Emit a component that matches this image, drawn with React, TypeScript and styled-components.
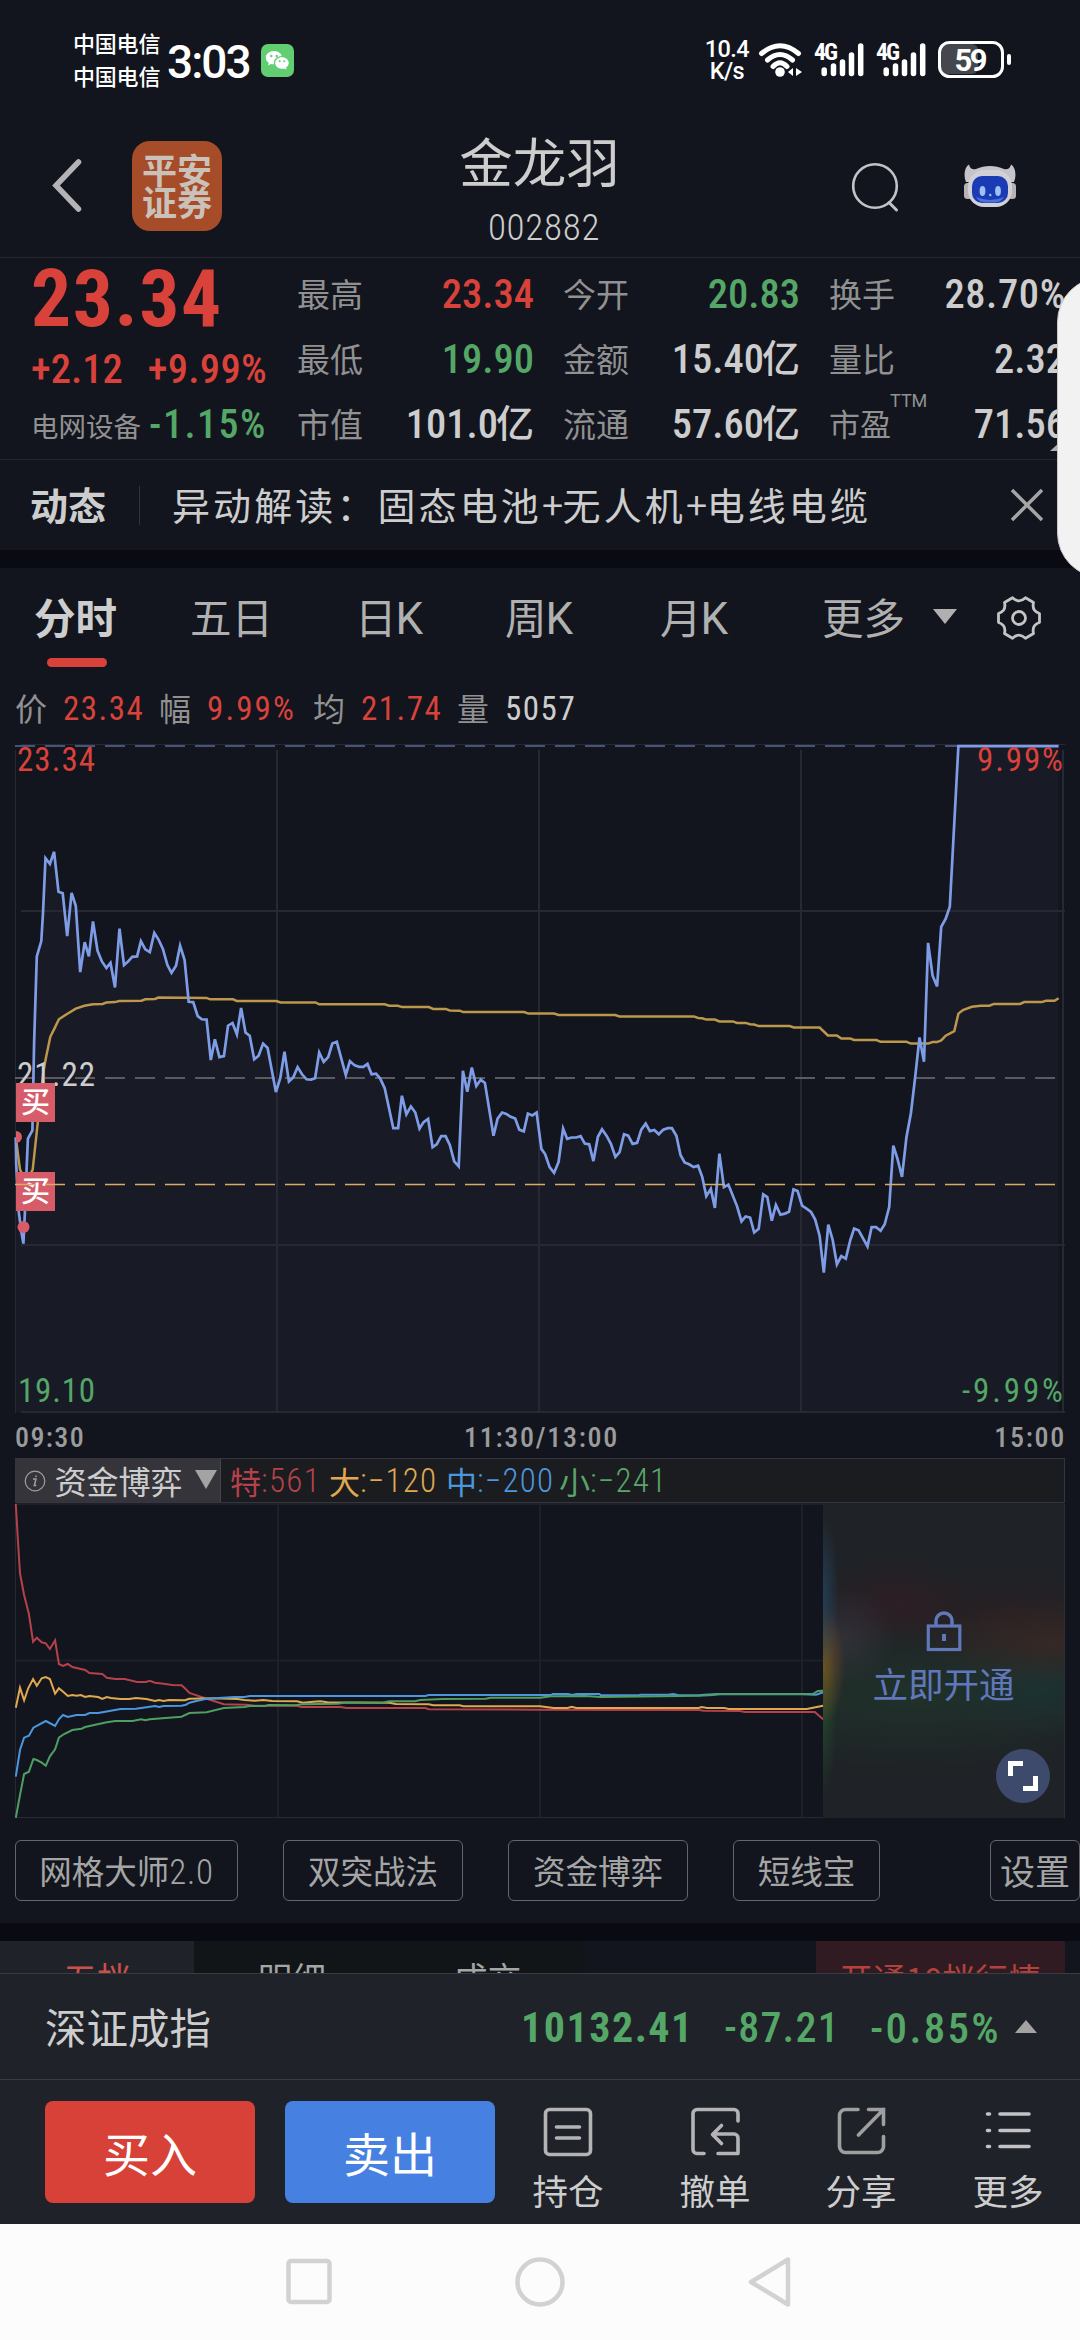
import React from "react";
import styled, { createGlobalStyle } from "styled-components";

const CJK = '"Noto Sans CJK SC", sans-serif';
const NUM = '"Roboto Condensed", Roboto, "Noto Sans CJK SC", sans-serif';
const RED = "#d9423a";
const GREEN = "#54a766";
const LIGHT = "#cdcdcd";
const GREY = "#919191";

const Global = createGlobalStyle`
  * { box-sizing: border-box; }
  body { margin: 0; background: #12151d; }
`;

const Screen = styled.div`
  position: relative;
  width: 1080px;
  height: 2340px;
  overflow: hidden;
  display: flex;
  flex-direction: column;
  background: #12151d;
  color: ${LIGHT};
  font-family: ${CJK};
  white-space: nowrap;
`;

/* Number text with narrow figures */
const Num = styled.span<{ $s: number; $c?: string; $w?: number; $ls?: number }>`
  font-family: ${NUM};
  font-size: ${(p) => p.$s}px;
  font-weight: ${(p) => p.$w ?? 500};
  letter-spacing: ${(p) => p.$ls ?? 0}px;
  color: ${(p) => p.$c ?? LIGHT};
  line-height: 1;
`;

/* ---------- status bar ---------- */
const StatusBar = styled.div`
  height: 120px;
  display: flex;
  align-items: center;
  justify-content: space-between;
  padding: 0 68px 0 73px;
  color: #fff;
`;
const StatusSide = styled.div`
  display: flex;
  align-items: center;
`;
const Carriers = styled.div`
  font-size: 22px;
  font-weight: 500;
  line-height: 33px;
  letter-spacing: -0.2px;
  width: 94px;
  margin-top: -3px;
`;
const Clock = styled.div`
  font: 500 46px/50px Roboto, sans-serif;
  letter-spacing: -2px;
  width: 94px;
  padding-top: 3px;
`;
const Speed = styled.div`
  font: 500 23.5px/22px Roboto, sans-serif;
  letter-spacing: -0.6px;
  text-align: center;
  margin-right: 9px;
`;
const StatusIcons = styled.svg`
  display: block;
`;

/* ---------- header ---------- */
const Header = styled.div`
  height: 138px;
  display: grid;
  grid-template-columns: 132px 90px 1fr 46px 66px 52px 64px;
  align-items: center;
  padding-bottom: 6px;
  border-bottom: 1px solid #282730;
`;
const Back = styled.svg`
  margin-left: 50px;
`;
const Logo = styled.div`
  width: 90px;
  height: 90px;
  border-radius: 18px;
  background: #a64c28;
  color: #cbc1bb;
  font-size: 35px;
  font-weight: 700;
  line-height: 32px;
  text-align: center;
  padding-top: 12px;
`;
const TitleBox = styled.div`
  display: flex;
  flex-direction: column;
  align-items: center;
  margin-left: 5px;
`;
const Title = styled.div`
  font-size: 53.5px;
  line-height: 62px;
  margin-top: 0;
  margin-bottom: 18px;
`;
const Code = styled.div`
  display: flex;
  margin-left: 9px;
  height: 34px;
`;

/* ---------- quote ---------- */
const Quote = styled.div`
  height: 202px;
  display: grid;
  grid-template-columns: repeat(4, 236px);
  column-gap: 30px;
  padding-left: 31px;
  border-bottom: 1px solid #282730;
`;
const PriceCol = styled.div`
  display: flex;
  flex-direction: column;
`;
const PriceRow = styled.div<{ $h: number }>`
  height: ${(p) => p.$h}px;
  display: flex;
  align-items: center;
  justify-content: space-between;
`;
const Sector = styled.span`
  font-size: 27.5px;
  color: ${GREY};
`;
const StatCol = styled.div`
  display: flex;
  flex-direction: column;
  padding-top: 4px;
`;
const StatRow = styled.div`
  height: 65px;
  display: flex;
  align-items: center;
  justify-content: space-between;
  position: relative;
`;
const StatLabel = styled.span<{ $small?: boolean }>`
  font-size: ${(p) => (p.$small ? 31 : 33)}px;
  line-height: 40px;
  padding-bottom: 4px;
  color: ${GREY};
`;
const StatValue = styled.span`
  display: flex;
  align-items: center;
  margin-right: -1px;
`;
const Unit = styled.span`
  font-size: 38px;
  line-height: 40px;
  padding-bottom: 7px;
  font-weight: 500;
  margin-left: -2px;
`;
const Ttm = styled.sup`
  position: absolute;
  left: 61px;
  top: -1px;
  font: 400 18px/20px Roboto, sans-serif;
  color: ${GREY};
`;
const Corner = styled.svg`
  position: absolute;
  left: 221px;
  top: 50px;
`;

/* ---------- news ---------- */
const News = styled.div`
  height: 90px;
  display: flex;
  align-items: center;
  padding: 0 34px 0 30px;
`;
const NewsTag = styled.span`
  font-size: 38px;
  line-height: 60px;
  padding-bottom: 3px;
  font-weight: 700;
  width: 109px;
`;
const NewsLine = styled.span`
  width: 1px;
  height: 39px;
  background: #33333f;
  margin-right: 32px;
`;
const NewsText = styled.span`
  flex: 1;
  font-size: 38px;
  line-height: 60px;
  padding-bottom: 3px;
  letter-spacing: 3.1px;
`;
const Plus = styled.span`
  letter-spacing: -0.4px;
`;
const Gap = styled.div`
  height: 18px;
  background: #0a0a13;
`;

/* ---------- period tabs ---------- */
const Tabs = styled.div`
  height: 110px;
  display: grid;
  grid-template-columns: 156px 165px 150px 155px 162px 110px 64px 50px;
  padding-left: 34px;
  align-items: start;
`;
const Tab = styled.div<{ $on?: boolean }>`
  font-size: 41.5px;
  line-height: 97px;
  font-weight: ${(p) => (p.$on ? 700 : 400)};
  color: ${(p) => (p.$on ? LIGHT : "#b0b0b0")};
  height: 99px;
  position: relative;
`;
const Underline = styled.i`
  position: absolute;
  left: 13px;
  bottom: 0;
  width: 60px;
  height: 9px;
  border-radius: 5px;
  background: ${RED};
`;
const TabK = styled.span`
  font-size: 44px;
  font-family: Roboto, sans-serif;
  font-weight: 400;
  line-height: 1;
  margin-left: -1px;
`;
const TabIcon = styled.svg`
  margin-top: 27px;
`;

const InfoRow = styled.div`
  height: 60px;
  display: flex;
  align-items: center;
  padding-left: 15px;
`;
const InfoItem = styled.div<{ $w: number }>`
  width: ${(p) => p.$w}px;
  display: flex;
  align-items: center;
  gap: 16px;
  font-size: 32px;
  line-height: 44px;
  color: ${GREY};
`;
const InfoLabel = styled.span`
  padding-bottom: 3px;
`;

const Chart = styled.svg`
  display: block;
  flex: none;
`;
const TimeAxis = styled.div`
  height: 44px;
  display: grid;
  grid-template-columns: 1fr auto 1fr;
  align-items: center;
  padding: 4px 15px 0;
  & > :nth-child(2) { margin-left: 3px; }
  & > :last-child { text-align: right; margin-right: -1px; }
`;

/* ---------- funds ---------- */
const FundHead = styled.div`
  height: 45px;
  margin: 0 15px;
  display: flex;
  align-items: center;
  background: #1b1c20;
  border: 1px solid #35353f;
`;
const FundPick = styled.div`
  width: 205px;
  height: 43px;
  display: flex;
  align-items: center;
  justify-content: space-between;
  padding: 0 3px 0 8px;
  background: #35343a;
  border-right: 1px solid #45454f;
  font-size: 32px;
  line-height: 43px;
  margin-right: 9px;
`;
const PickName = styled.span`
  margin-right: 4px;
`;
const FundItem = styled.div<{ $c: string; $w: number }>`
  width: ${(p) => p.$w}px;
  display: flex;
  align-items: center;
  font-size: 31px;
  line-height: 43px;
  color: ${(p) => p.$c};
`;
const FundBody = styled.div`
  position: relative;
  height: 315px;
`;
const LockPanel = styled.div`
  position: absolute;
  left: 823px;
  top: 1px;
  width: 242px;
  height: 314px;
  display: flex;
  flex-direction: column;
  align-items: center;
  gap: 5px;
  padding-top: 107px;
  color: #6077ba;
  font-size: 35.5px;
  line-height: 50px;
  border-right: 1px solid #2b2e35;
  background:
    radial-gradient(ellipse 16px 80px at 0 90px, rgba(38, 78, 112, 0.6), transparent),
    radial-gradient(ellipse 22px 60px at 0 162px, rgba(150, 95, 30, 0.65), transparent),
    radial-gradient(ellipse 14px 90px at 0 205px, rgba(35, 85, 45, 0.6), transparent),
    radial-gradient(ellipse 50px 50px at 22px 133px, rgba(66, 58, 70, 0.5), transparent),
    radial-gradient(ellipse 70px 46px at 72px 96px, rgba(58, 28, 36, 0.5), transparent),
    radial-gradient(ellipse 130px 46px at 232px 138px, rgba(62, 42, 36, 0.7), transparent),
    radial-gradient(ellipse 150px 50px at 180px 112px, rgba(46, 30, 34, 0.55), transparent),
    radial-gradient(ellipse 110px 50px at 222px 182px, rgba(26, 56, 56, 0.6), transparent),
    radial-gradient(ellipse 260px 80px at 90px 190px, rgba(32, 54, 44, 0.75), transparent),
    #1f2226;
`;
const Expand = styled.svg`
  position: absolute;
  left: 996px;
  top: 246px;
`;

const Chips = styled.div`
  height: 105px;
  display: flex;
  align-items: flex-start;
  padding: 22px 0 0 15px;
  gap: 45px;
`;
const Chip = styled.div<{ $w: number; $last?: boolean }>`
  width: ${(p) => p.$w}px;
  flex: none;
  height: 61px;
  border: 1px solid #66666a;
  border-radius: 6px;
  font-size: ${(p) => (p.$last ? 35 : 32.5)}px;
  line-height: 58px;
  text-align: center;
  color: #a5a5a5;
  margin-left: ${(p) => (p.$last ? 65 : 0)}px;
`;

/* ---------- order book strip ---------- */
const Book = styled.div`
  height: 32px;
  overflow: hidden;
  display: grid;
  grid-template-columns: 194px 196px 195px 231px 249px;
  font-size: 34px;
  line-height: 44px;
  color: #a5a5a5;
  text-align: center;
`;
const BookCell = styled.div<{ $bg?: string; $c?: string }>`
  height: 60px;
  padding-top: 15px;
  background: ${(p) => p.$bg ?? "transparent"};
  color: ${(p) => p.$c ?? "inherit"};
`;
const Promo = styled.span`
  font-size: 33px;
`;

/* ---------- index and actions ---------- */
const IndexBar = styled.div`
  height: 106px;
  display: flex;
  align-items: center;
  padding-left: 45px;
  background: #1f2229;
  border-top: 1px solid #3a3c44;
`;
const IndexName = styled.span`
  font-size: 41.5px;
  line-height: 60px;
  padding-bottom: 1px;
  width: 476px;
`;
const Cell = styled.span<{ $w: number }>`
  width: ${(p) => p.$w}px;
  display: flex;
  padding-top: 3px;
`;
const Actions = styled.div`
  height: 145px;
  display: flex;
  align-items: flex-start;
  padding: 21px 0 0 45px;
  background: #1f2229;
  border-top: 1px solid #3a3c44;
`;
const Trade = styled.div<{ $bg: string }>`
  flex: none;
  width: 210px;
  height: 102px;
  margin-right: 30px;
  border-radius: 8px;
  background: ${(p) => p.$bg};
  color: #fff;
  font-size: 47px;
  line-height: 101px;
  text-align: center;
`;
const Action = styled.div<{ $w: number }>`
  flex: none;
  width: ${(p) => p.$w}px;
  display: flex;
  flex-direction: column;
  align-items: center;
  padding-top: 6px;
  font-size: 35.5px;
  line-height: 44px;
  gap: 11px;
`;
const NavBar = styled.div`
  height: 116px;
  background: #fcfcfc;
  display: flex;
  justify-content: center;
  align-items: center;
  gap: 180px;
`;
const SidePanel = styled.div`
  position: absolute;
  left: 1057px;
  top: 277px;
  width: 90px;
  height: 301px;
  border-radius: 45px;
  background: #f2f2f2;
  border: 1px solid #c8c8cc;
`;

const PRICE =
  "46,665 47,740 54,870 62,930 68,962 72,880 77,760 81,668 94,645 99,400 107,158 120,115 125,37 132,-117 145,-101 157,-135 170,-23 182,-19 195,101 208,-20 220,17 233,202 246,118 258,158 270,60 283,142 296,172 309,190 321,176 334,245 347,80 360,182 371,173 384,159 398,158 409,115 422,138 435,146 448,92 460,110 473,137 486,182 498,204 511,184 523,128 536,168 548,285 561,286 574,325 586,334 600,335 612,448 624,390 637,440 650,437 662,352 675,344 688,376 700,302 713,371 725,380 738,446 751,436 764,402 777,414 801,538 814,498 826,425 839,508 852,496 864,468 877,488 890,502 903,503 915,499 927,427 940,453 953,440 965,402 978,397 1004,490 1016,451 1030,463 1043,467 1055,467 1067,459 1079,488 1092,486 1104,500 1117,527 1142,639 1156,639 1167,548 1180,600 1193,578 1206,595 1218,640 1230,622 1243,613 1256,692 1268,684 1281,661 1294,661 1306,686 1319,732 1332,746 1344,478 1357,537 1370,469 1383,521 1396,503 1408,512 1433,660 1445,612 1458,595 1470,599 1483,607 1496,612 1508,643 1521,648 1533,598 1546,603 1558,595 1572,697 1583,712 1596,748 1609,764 1622,733 1635,640 1647,669 1660,665 1673,665 1686,661 1698,682 1711,684 1723,731 1736,663 1748,642 1761,660 1774,683 1787,719 1799,706 1812,656 1824,660 1837,683 1850,680 1862,643 1875,626 1887,647 1900,644 1913,656 1926,643 1939,639 1951,639 1964,660 1976,714 1988,735 2001,740 2014,748 2027,744 2039,775 2051,829 2064,809 2076,862 2089,710 2102,804 2115,797 2140,857 2153,900 2165,886 2178,889 2190,931 2203,921 2216,824 2228,832 2241,898 2253,854 2266,881 2279,878 2291,873 2304,810 2316,815 2329,856 2342,864 2355,873 2367,895 2380,940 2392,1043 2405,909 2418,952 2430,1020 2443,997 2456,1004 2469,952 2480,920 2493,925 2519,970 2531,916 2544,916 2557,926 2569,908 2582,860 2594,688 2606,725 2619,775 2632,665 2645,597 2657,500 2670,385 2683,453 2695,120 2708,212 2721,242 2733,75 2746,52 2758,19 2783,-431 3074,-431";
const AVERAGE =
  "46,665 52,710 58,755 76,790 95,755 110,620 126,480 134,440 146,383 158,360 171,334 190,322 220,304 245,296 270,292 298,291 309,287 334,286 346,283 411,282 422,278 450,277 460,273 600,274 610,278 677,278 688,283 802,283 815,287 916,287 927,292 1117,292 1130,296 1155,296 1168,300 1245,300 1258,305 1294,305 1306,309 1335,310 1345,314 1522,314 1534,318 1609,318 1622,322 1786,322 1799,326 2015,326 2027,330 2039,331 2051,335 2076,335 2089,340 2128,340 2140,344 2165,344 2178,348 2190,349 2203,353 2293,353 2305,357 2380,357 2404,379 2430,379 2443,388 2469,388 2480,392 2545,392 2557,397 2632,397 2645,402 2695,402 2708,398 2721,398 2733,393 2746,380 2771,367 2783,318 2796,308 2822,299 2848,296 2873,296 2886,291 2962,291 2974,286 3025,286 3037,282 3062,282 3074,275";

const FUNDS: { color: string; points: string }[] = [
  {
    color: "#b5424a",
    points:
      "46,192 52,300 58,400 70,465 84,522 96,605 107,593 121,607 133,610 145,627 160,601 171,672 183,678 197,672 210,681 247,690 260,699 297,702 310,713 335,717 362,717 398,726 423,726 435,722 450,728 475,731 500,735 527,736 537,745 550,759 600,776 650,793 715,794 740,797 862,797 875,801 990,801 1005,804 1235,804 1245,808 1568,809 2030,810 2043,812 2148,813 2163,816 2366,816 2390,838",
  },
  {
    color: "#e0a94f",
    points:
      "46,803 58,743 70,781 82,745 96,717 107,737 121,715 133,711 145,717 160,761 171,745 185,757 197,768 210,765 222,767 235,765 247,771 260,768 285,771 297,777 310,771 322,774 350,777 375,777 395,774 425,777 450,783 462,780 475,783 490,780 537,781 550,776 620,775 690,777 710,780 740,782 765,780 790,783 862,784 880,788 910,785 930,784 950,787 1130,788 1150,792 1245,793 1258,796 1335,796 1345,799 1568,799 1608,804 1648,804 1660,800 1673,804 2028,804 2038,801 2053,804 2103,804 2116,807 2343,807 2368,802 2390,797",
  },
  {
    color: "#4b97dd",
    points:
      "46,1010 58,930 70,893 84,887 97,863 133,843 160,858 171,838 183,825 197,831 222,825 247,825 260,819 285,819 322,812 350,807 395,806 425,802 450,798 462,801 475,798 527,797 540,794 550,788 570,783 600,776 680,771 710,771 725,768 1235,768 1245,765 1600,765 1605,762 1650,762 1660,765 1675,762 1740,762 1745,766 1855,766 1860,764 1940,764 1955,762 1970,766 2030,766 2045,764 2085,762 2330,763 2370,764 2390,757",
  },
  {
    color: "#4f9e63",
    points:
      "46,1133 58,1065 70,1002 84,995 97,957 107,960 121,968 133,977 145,949 160,928 171,893 185,883 210,870 237,866 247,861 310,847 335,843 385,843 410,838 422,841 435,838 527,830 550,819 600,817 650,804 710,801 725,798 770,798 780,795 860,796 875,793 980,791 1000,788 1110,788 1130,784 1205,784 1220,780 1285,777 1410,776 1425,773 1568,773 1600,769 1700,768 1745,771 2030,767 2070,765 2090,762 2360,762 2375,753 2390,752",
  },
];

/* Turns a sampled trace into chart pixels */
const trace = (points: string, ky: number, dy: number) =>
  points
    .split(" ")
    .map((p) => {
      const [x, y] = p.split(",").map(Number);
      return `${(x / 2.9037).toFixed(1)},${(y / ky + dy).toFixed(1)}`;
    })
    .join(" ");

const AxisText = styled.text`
  font-family: ${NUM};
  font-size: 33px;
  font-weight: 400;
`;
const MarkText = styled.text`
  font-family: ${CJK};
  font-size: 29px;
  font-weight: 500;
  fill: #fff;
`;

const Mark = ({ y }: { y: number }) => (
  <g>
    <rect x="16" y={y} width="39" height="39" fill="#d65c69" />
    <MarkText x="21" y={y + 30}>买</MarkText>
  </g>
);

const PriceChart = () => {
  const price = trace(PRICE, 2.8, 162);
  return (
    <Chart width="1080" height="676" viewBox="0 0 1080 676">
      <polygon points={`${price} 1058.7,674 16,674`} fill="#181a26" />
      <g stroke="#262833" strokeWidth="2">
        <path d="M21 6.500H1065" strokeWidth="1" />
        <path d="M21 173H1065M21 507H1065M21 674H1065" />
        <path d="M277 12V675M539 12V675M801 12V675M1063 12V675" />
        <path d="M15.500 12V675" strokeWidth="1" />
      </g>
      <g fill="none" strokeDasharray="20 10">
        <path d="M15 8H1056" stroke="#46547a" strokeWidth="2" />
        <path d="M15 340H1056" stroke="#5b5c62" strokeWidth="1.800" />
      </g>
      <AxisText x="17" y="33" textLength="78" fill={RED}>23.34</AxisText>
      <polyline points={trace(AVERAGE, 2.8, 162)} fill="none" stroke="#bd974c" strokeWidth="2.500" />
      <polyline points={price} fill="none" stroke="#7f9de6" strokeWidth="2.700" />
      <AxisText x="1063" y="33" textLength="86" textAnchor="end" fill={RED}>9.99%</AxisText>
      <AxisText x="17" y="348" textLength="78" fill={LIGHT}>21.22</AxisText>
      <AxisText x="18" y="664" textLength="77" fill={GREEN}>19.10</AxisText>
      <AxisText x="1063" y="664" textLength="101" textAnchor="end" fill={GREEN}>-9.99%</AxisText>
      <path d="M16 393a6 6 0 0 1 0 12z" fill="#d65c69" />
      <circle cx="23.500" cy="489" r="6" fill="#d65c69" />
      <Mark y={345} />
      <Mark y={434} />
      <path d="M15 446.500H1056" stroke="#dcaa64" strokeWidth="1.300" strokeDasharray="20 10" />
    </Chart>
  );
};

type Stat = [string, string, string?, string?];
const STATS: Stat[][] = [
  [["最高", "23.34", RED], ["最低", "19.90", GREEN], ["市值", "101.0", LIGHT, "亿"]],
  [["今开", "20.83", GREEN], ["金额", "15.40", LIGHT, "亿"], ["流通", "57.60", LIGHT, "亿"]],
  [["换手", "28.70%"], ["量比", "2.32"], ["市盈", "71.56"]],
];

const Signal = ({ x }: { x: number }) => (
  <g transform={`translate(${x} 0)`}>
    <text x="0" y="25" fontFamily={NUM} fontWeight="700" fontSize="24" fill="#fff" textLength="24">4G</text>
    <g stroke="#fff" strokeWidth="5.500" strokeLinecap="round">
      <path d="M10.200 35V38.500M19.500 31V38.500M28.500 27V38.500M37.500 20V38.500M46.700 11V38.500" />
    </g>
  </g>
);

export default function App() {
  return (
    <Screen>
      <Global />
      <StatusBar>
        <StatusSide>
          <Carriers>中国电信<br />中国电信</Carriers>
          <Clock>3:03</Clock>
          <StatusIcons width="33" height="33" viewBox="0 0 33 33">
            <rect width="33" height="33" rx="7" fill="#61ce72" />
            <path d="M13 7c-4.700 0-8.200 3-8.200 6.700 0 2.100 1.100 3.900 2.900 5.100l-.6 2.600 2.800-1.500c1 .3 2 .4 3.100.4-.9-4.500 2.600-8.200 7.800-8.200C19.900 9.200 16.800 7 13 7z" fill="#fff" />
            <path d="M21 13.300c-3.900 0-6.800 2.500-6.800 5.700s2.900 5.700 6.800 5.700c.8 0 1.600-.1 2.300-.3l2.200 1.200-.5-2.100c1.600-1 2.700-2.600 2.700-4.500 0-3.200-2.900-5.700-6.700-5.700z" fill="#fff" />
            <g fill="#61ce72">
              <circle cx="10.300" cy="12" r="1.200" /><circle cx="15.700" cy="12" r="1.200" />
              <circle cx="18.700" cy="17.300" r="1" /><circle cx="23.200" cy="17.300" r="1" />
            </g>
          </StatusIcons>
        </StatusSide>
        <StatusSide>
          <Speed>10.4<br />K/s</Speed>
          <StatusIcons width="254" height="50" viewBox="0 0 254 50">
            <g fill="none" stroke="#fff" strokeWidth="5" strokeLinecap="round">
              <path d="M3.500 18.500Q22 3 40.500 18.500M9.500 25Q22 14 34.500 25M15 31.500Q22 24 29 31.500" />
            </g>
            <circle cx="22" cy="37" r="4.800" fill="#fff" />
            <path d="M35 33v8l-5-4zM38 33v8l6-4z" fill="#fff" />
            <Signal x={56} />
            <Signal x={118} />
            <rect x="182" y="9" width="38" height="30" rx="6" fill="#45474e" />
            <rect x="181.500" y="7.500" width="63" height="34" rx="10" fill="none" stroke="#fff" strokeWidth="3" />
            <rect x="249" y="19" width="4" height="11" rx="2" fill="#fff" />
            <text x="213" y="35.500" textAnchor="middle" fontFamily="Roboto" fontWeight="700" fontSize="31" fill="#fff" textLength="33">59</text>
          </StatusIcons>
        </StatusSide>
      </StatusBar>

      <Header>
        <Back width="34" height="60" viewBox="0 0 34 60">
          <path d="M28.500 6L6 29.500 28.500 53" fill="none" stroke="#b4b4b6" strokeWidth="5.500" strokeLinecap="round" />
        </Back>
        <Logo>平安<br />证券</Logo>
        <TitleBox>
          <Title>金龙羽</Title>
          <Code><Num $s={37} $w={300} $ls={0.7}>002882</Num></Code>
        </TitleBox>
        <svg width="50" height="56" viewBox="0 0 50 56">
          <circle cx="23" cy="28" r="21.800" fill="none" stroke="#c2c3c6" strokeWidth="2.600" />
          <path d="M37 44.500l7.500 7.500" stroke="#c2c3c6" strokeWidth="3" strokeLinecap="round" />
        </svg>
        <span />
        <svg width="52" height="44" viewBox="0 0 52 44">
          <path d="M2 18C-1 10 1 3 5 .5 6 5 9 6 12 5c9-4 19-4 28 0 3 1 6 0 7-4.500 4 2.500 6 9.500 3 17.500z" fill="#c4c4ca" />
          <rect x="0" y="19" width="8" height="16" rx="3.500" fill="#b9b3b6" />
          <rect x="44" y="19" width="8" height="16" rx="3.500" fill="#b9b3b6" />
          <rect x="4" y="6" width="44" height="37" rx="16" fill="#d0d0d5" />
          <rect x="8" y="12" width="36" height="27" rx="10" fill="#1b3bb4" />
          <path d="M12 33q14 6 28 0-3 5-9 5.500H21q-6-.5-9-5.500z" fill="#4a72d8" />
          <ellipse cx="18.500" cy="27" rx="2.900" ry="5" fill="#9ec1f2" />
          <ellipse cx="34" cy="27" rx="2.900" ry="5" fill="#9ec1f2" />
          <circle cx="26.300" cy="31" r="1.200" fill="#9ec1f2" />
        </svg>
      </Header>

      <Quote>
        <PriceCol>
          <PriceRow $h={81}><Num $s={79.500} $w={700} $ls={1.600} $c={RED}>23.34</Num></PriceRow>
          <PriceRow $h={61}>
            <Num $s={40.500} $c={RED}>+2.12</Num>
            <Num $s={40.500} $c={RED} $ls={0.3}>+9.99%</Num>
          </PriceRow>
          <PriceRow $h={50}>
            <Sector>电网设备</Sector>
            <Num $s={40} $c={GREEN} $ls={1.500}>-1.15%</Num>
          </PriceRow>
        </PriceCol>
        {STATS.map((col, i) => (
          <StatCol key={i}>
            {col.map(([label, value, color, unit]) => (
              <StatRow key={label}>
                <StatLabel $small={label === "市盈"}>{label}</StatLabel>
                {label === "市盈" && <Ttm>TTM</Ttm>}
                {label === "市盈" && (
                  <Corner width="10" height="9" viewBox="0 0 10 9"><path d="M0 9L10 0V9z" fill="#b0b0b0" /></Corner>
                )}
                <StatValue>
                  <Num $s={40.500} $c={color} $ls={value.endsWith("%") ? 0.6 : 0}>{value}</Num>
                  {unit && <Unit>{unit}</Unit>}
                </StatValue>
              </StatRow>
            ))}
          </StatCol>
        ))}
      </Quote>

      <News>
        <NewsTag>动态</NewsTag>
        <NewsLine />
        <NewsText>异动解读：固态电池<Plus>+</Plus>无人机<Plus>+</Plus>电线电缆</NewsText>
        <svg width="38" height="38" viewBox="0 0 38 38">
          <path d="M4 4l30 30M34 4L4 34" stroke="#a5a5a7" strokeWidth="3.500" />
        </svg>
      </News>
      <Gap />

      <Tabs>
        <Tab $on>分时<Underline /></Tab>
        <Tab>五日</Tab>
        <Tab>日<TabK>K</TabK></Tab>
        <Tab>周<TabK>K</TabK></Tab>
        <Tab>月<TabK>K</TabK></Tab>
        <Tab>更多</Tab>
        <TabIcon width="26" height="46" viewBox="0 0 26 46">
          <path d="M1 14h24L13 29z" fill="#b0b0b0" />
        </TabIcon>
        <TabIcon width="46" height="46" viewBox="0 0 46 46">
          <path d="M16.500 2.800Q23 9 29.500 2.800L37.500 7.500Q35.500 16 43.500 18.500V27.500Q35.500 30 37.500 38.500L29.500 43.200Q23 37 16.500 43.200L8.500 38.500Q10.500 30 2.500 27.500V18.500Q10.500 16 8.500 7.500Z" fill="none" stroke="#c4c4c4" strokeWidth="2.800" strokeLinejoin="round" />
          <circle cx="23" cy="23" r="6.500" fill="none" stroke="#c4c4c4" strokeWidth="2.800" />
        </TabIcon>
      </Tabs>

      <InfoRow>
        <InfoItem $w={144}><InfoLabel>价</InfoLabel><Num $s={33} $w={400} $c={RED} $ls={1.500}>23.34</Num></InfoItem>
        <InfoItem $w={154}><InfoLabel>幅</InfoLabel><Num $s={33} $w={400} $c={RED} $ls={2.100}>9.99%</Num></InfoItem>
        <InfoItem $w={144}><InfoLabel>均</InfoLabel><Num $s={33} $w={400} $c={RED} $ls={1.500}>21.74</Num></InfoItem>
        <InfoItem $w={150}><InfoLabel>量</InfoLabel><Num $s={33} $w={400} $ls={1.500}>5057</Num></InfoItem>
      </InfoRow>

      <PriceChart />
      <TimeAxis>
        <Num $s={28} $c="#9b9b9b" $ls={1.400}>09:30</Num>
        <Num $s={28} $c="#9b9b9b" $ls={1.700}>11:30/13:00</Num>
        <Num $s={28} $c="#9b9b9b" $ls={1.700}>15:00</Num>
      </TimeAxis>

      <FundHead>
        <FundPick>
          <svg width="22" height="22" viewBox="0 0 22 22">
            <circle cx="11" cy="11" r="9.800" fill="none" stroke="#a0a0a0" strokeWidth="1.200" />
            <path d="M9 9h3l-1.700 6.500h2M12 5.500v1.500" fill="none" stroke="#a0a0a0" strokeWidth="1.500" />
          </svg>
          <PickName>资金博弈</PickName>
          <svg width="22" height="22" viewBox="0 0 22 22">
            <path d="M0 0h22L11 19z" fill="#a3a3a3" />
          </svg>
        </FundPick>
        <FundItem $c="#b5424a" $w={99}>特<Num $s={33} $w={300} $c="inherit" $ls={1.300}>:561</Num></FundItem>
        <FundItem $c="#e0a94f" $w={117}>大<Num $s={33} $w={300} $c="inherit" $ls={1.200}>:−120</Num></FundItem>
        <FundItem $c="#4b97dd" $w={113}>中<Num $s={33} $w={300} $c="inherit" $ls={1.200}>:−200</Num></FundItem>
        <FundItem $c="#5aa56a" $w={110}>小<Num $s={33} $w={300} $c="inherit" $ls={1.200}>:−241</Num></FundItem>
      </FundHead>
      <FundBody>
        <Chart width="1080" height="316" viewBox="0 0 1080 316">
          <g stroke="#1e2029" strokeWidth="2">
            <path d="M15 1H1065M15 157.500H823M278 1V314M540 1V314M802 1V314" />
            <path d="M15.500 1V315M15 314.500H1065" strokeWidth="1" stroke="#262833" />
          </g>
          {FUNDS.map((f) => (
            <polyline key={f.color} points={trace(f.points, 3, -63)} fill="none" stroke={f.color} strokeWidth="2" />
          ))}
        </Chart>
        <LockPanel>
          <svg width="36" height="42" viewBox="0 0 36 42">
            <path d="M10 15V10a8 8 0 0 1 16 0V15" fill="none" stroke="#6077ba" strokeWidth="3.500" />
            <rect x="2.300" y="15" width="31.500" height="23.500" fill="none" stroke="#6077ba" strokeWidth="3.200" />
            <rect x="16" y="23" width="4" height="7" fill="#6077ba" />
          </svg>
          立即开通
        </LockPanel>
        <Expand width="54" height="54" viewBox="0 0 54 54">
          <circle cx="27" cy="27" r="27" fill="#3e4a6c" />
          <path d="M14.500 27V14.500H27M39.500 27V39.500H27" fill="none" stroke="#fff" strokeWidth="5" />
        </Expand>
      </FundBody>

      <Chips>
        <Chip $w={223}>网格大师<Num $s={35} $w={300} $c="inherit" $ls={0.7}>2.0</Num></Chip>
        <Chip $w={180}>双突战法</Chip>
        <Chip $w={180}>资金博弈</Chip>
        <Chip $w={147}>短线宝</Chip>
        <Chip $w={90} $last>设置</Chip>
      </Chips>
      <Gap />

      <Book>
        <BookCell $bg="#1f2228" $c="#cc5048">五档</BookCell>
        <BookCell $bg="#121518">明细</BookCell>
        <BookCell $bg="#121518">成交</BookCell>
        <BookCell />
        <BookCell $bg="#2f1b21" $c="#b3423d"><Promo>开通10档行情</Promo></BookCell>
      </Book>

      <IndexBar>
        <IndexName>深证成指</IndexName>
        <Cell $w={203}><Num $s={42} $w={700} $c={GREEN} $ls={1.500}>10132.41</Num></Cell>
        <Cell $w={146}><Num $s={42} $c={GREEN} $ls={1.200}>-87.21</Num></Cell>
        <Cell $w={145}><Num $s={43} $c={GREEN} $ls={2.300}>-0.85%</Num></Cell>
        <svg width="22" height="14" viewBox="0 0 22 14"><path d="M0 13L11 0l11 13z" fill="#a3a3a3" /></svg>
      </IndexBar>
      <Actions>
        <Trade $bg="#d84138">买入</Trade>
        <Trade $bg="#4681e2">卖出</Trade>
        <Action $w={86}>
          <svg width="50" height="50" viewBox="0 0 50 50" fill="none" stroke="#b4b4b6" strokeWidth="3.600" strokeLinecap="round">
            <rect x="2.500" y="2.500" width="45" height="45" rx="4" /><path d="M13.500 20h23M13.500 31h23" />
          </svg>
          持仓
        </Action>
        <Action $w={208}>
          <svg width="50" height="50" viewBox="0 0 50 50" fill="none" stroke="#b4b4b6" strokeWidth="3.600" strokeLinecap="round" strokeLinejoin="round">
            <path d="M48 14V6.500a4 4 0 0 0-4-4H7a4 4 0 0 0-4 4V42.500a4 4 0 0 0 4 4H14M28 46.500H48V31a4 4 0 0 0-4-4H25M31.500 18.500L22.500 27.500 31.500 36.500" />
          </svg>
          撤单
        </Action>
        <Action $w={84}>
          <svg width="50" height="50" viewBox="0 0 50 50" fill="none" stroke="#9f9f9f" strokeWidth="3.600" strokeLinecap="round">
            <path d="M22 2.500H9.500a6 6 0 0 0-6 6V39.500a6 6 0 0 0 6 6H41.500a6 6 0 0 0 6-6V29.500M32.500 2.500H47.500V17.500M47.500 2.500L22.500 28" />
          </svg>
          分享
        </Action>
        <Action $w={210}>
          <svg width="50" height="50" viewBox="0 0 50 50" fill="none" stroke="#c2c2c4" strokeWidth="3.600" strokeLinecap="round">
            <path d="M4.500 7h2M4.500 23.500h2M4.500 39.500h2M17 7H46M17 23.500H46M17 39.500H46" />
          </svg>
          更多
        </Action>
      </Actions>
      <NavBar>
        <svg width="50" height="50" viewBox="0 0 50 50" fill="none" stroke="#d2d2d2" strokeWidth="4.500">
          <rect x="4.500" y="4" width="41" height="41" rx="2.500" />
        </svg>
        <svg width="52" height="50" viewBox="0 0 52 50" fill="none" stroke="#d2d2d2" strokeWidth="4.500">
          <circle cx="26" cy="25" r="22.500" />
        </svg>
        <svg width="50" height="50" viewBox="0 0 50 50" fill="none" stroke="#d2d2d2" strokeWidth="4.500" strokeLinejoin="round">
          <path d="M42 2.500V47.500L5 25z" />
        </svg>
      </NavBar>
      <SidePanel />
    </Screen>
  );
}
